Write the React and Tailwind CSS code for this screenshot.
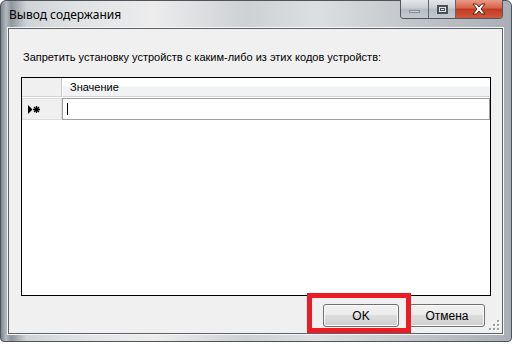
import React from "react";

function CloseGlyph() {
  return (
    <svg width="18" height="12" viewBox="0 0 18 12">
      <path d="M3 1 L6.5 1 L9 4 L11.5 1 L15 1 L11 6 L15 11 L11.5 11 L9 8 L6.5 11 L3 11 L7 6 Z" fill="#ffffff" stroke="#5a1d12" strokeWidth="1" strokeLinejoin="round" />
    </svg>
  );
}

function Grip() {
  const dots = [
    [8, 0],
    [4, 4],
    [8, 4],
    [0, 8],
    [4, 8],
    [8, 8],
  ];
  return (
    <svg width="11" height="11" viewBox="0 0 11 11">
      {dots.map(([x, y], i) => (
        <g key={i}>
          <rect x={x + 1} y={y + 1} width="2" height="2" fill="#ffffff" />
          <rect x={x} y={y} width="2" height="2" fill="#a0a0a0" />
        </g>
      ))}
    </svg>
  );
}

export default function App() {
  return (
    <div className="w-[512px] h-[344px] bg-white overflow-hidden relative" style={{ fontFamily: '"Liberation Sans", Arial, sans-serif' }}>
      <div className="w-[512px] h-[342px] flex flex-col rounded-t-[6px] rounded-b-[4px] border border-[#4f545a] bg-[linear-gradient(90deg,#7f878e_0%,#b4babf_1%,#8e969c_2%,#cfd3d6_5%,#dfe2e4_14%,#ececec_30%,#cdd1d4_48%,#dcdfe1_62%,#c3c7cb_80%,#a9afb5_100%)] relative">
        {/* title bar */}
        <div className="h-[27px] flex items-start relative shrink-0">
          <div className="pl-[8px] pt-[6px] text-[12px] leading-[16px] text-black" style={{ fontFamily: '"Noto Sans", "Open Sans", sans-serif' }}>
            Вывод содержания
          </div>
          <div className="absolute top-[-1px] right-[8px] flex h-[19px] rounded-b-[4px] border border-t-0 border-[#4f565e] overflow-hidden">
            <div className="w-[28px] h-full border-r border-[#5f666e] bg-[linear-gradient(180deg,#e4e7ea_0%,#c9ced3_45%,#b5bcc3_50%,#c3c9cf_100%)] flex items-center justify-center">
              <div className="w-[11px] h-[3px] mt-[4px] bg-[#c9ced3] border border-[#8a9097]"></div>
            </div>
            <div className="w-[27px] h-full border-r border-[#5f666e] bg-[linear-gradient(180deg,#e4e7ea_0%,#c9ced3_45%,#b5bcc3_50%,#c3c9cf_100%)] flex items-center justify-center">
              <div className="w-[11px] h-[9px] border-[2px] border-[#4a5058] bg-[#dfe3e7] flex items-center justify-center">
                <div className="w-[5px] h-[3px] border border-[#4a5058]"></div>
              </div>
            </div>
            <div className="w-[46px] h-full bg-[linear-gradient(180deg,#e99a88_0%,#d8634a_45%,#c23a20_50%,#d2563b_100%)] flex items-center justify-center">
              <CloseGlyph />
            </div>
          </div>
        </div>

        {/* client area */}
        <div className="ml-[7px] mr-[8px] mb-[7px] flex-1 border border-[#5d6268] bg-[#f0f0f0] flex flex-col relative shadow-[0_0_0_1px_#f4f6f8]">
          <div className="ml-[14px] mt-[21px] h-[14px] text-[11px] leading-[14px] text-black whitespace-nowrap">
            Запретить установку устройств с каким-либо из этих кодов устройств:
          </div>

          {/* data grid */}
          <div className="ml-[12px] mt-[13px] w-[470px] h-[219px] border border-black bg-white flex flex-col">
            <div className="h-[19px] flex shrink-0">
              <div className="w-[40px] h-full bg-[#f0f0f0] border-r border-[#c8c8c8] border-b border-b-[#d4d4d4]"></div>
              <div className="flex-1 h-full bg-[linear-gradient(180deg,#ffffff_0%,#ffffff_45%,#f1f2f4_50%,#f1f2f4_100%)] border-l border-white border-b border-b-[#d5d5d5] text-[11px] leading-[18px] pl-[7px] text-black">
                Значение
              </div>
            </div>
            <div className="h-[1px] bg-white shrink-0"></div>
            <div className="h-[22px] flex shrink-0">
              <div className="w-[40px] h-full bg-[#f0f0f0] border border-[#dcdcdc] flex items-center pl-[5px]">
                <svg width="12" height="9" viewBox="0 0 12 9">
                  <path d="M0 0 L4.5 4.5 L0 9 Z" fill="#000" />
                  <path d="M8.5 1 V8 M5 4.5 H12 M6 2 L11 7 M11 2 L6 7" stroke="#000" strokeWidth="1.3" />
                </svg>
              </div>
              <div className="flex-1 h-full border border-[#a0a0a0] bg-white flex items-center pl-[4px]">
                <div className="w-[1px] h-[12px] bg-black"></div>
              </div>
            </div>
          </div>

          {/* buttons */}
          <div className="flex justify-end gap-[10px] pr-[17px] mt-[8px]">
            <div className="relative">
              <div className="w-[76px] h-[23px] rounded-[3px] border border-[#707070] bg-[linear-gradient(180deg,#f2f2f2_0%,#ebebeb_50%,#dddddd_50%,#cfcfcf_100%)] shadow-[inset_0_0_0_1px_#fcfcfc] flex items-center justify-center text-[12px] text-black">
                OK
              </div>
              <div className="absolute left-[-16px] top-[-11px] w-[104px] h-[40px] border-[5px] border-[#ed1c24]"></div>
            </div>
            <div className="w-[76px] h-[23px] rounded-[3px] border border-[#707070] bg-[linear-gradient(180deg,#f2f2f2_0%,#ebebeb_50%,#dddddd_50%,#cfcfcf_100%)] shadow-[inset_0_0_0_1px_#fcfcfc] flex items-center justify-center text-[12px] text-black">
              Отмена
            </div>
          </div>

          <div className="absolute right-[2px] bottom-[2px]">
            <Grip />
          </div>
        </div>
      </div>
    </div>
  );
}
